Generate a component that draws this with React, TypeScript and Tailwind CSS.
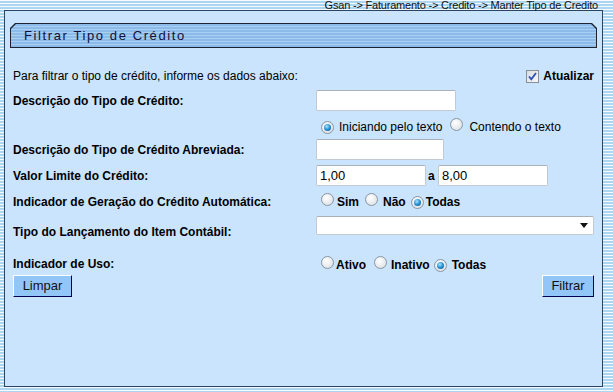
import React from "react";

const Radio = ({ checked }: { checked?: boolean }) => (
  <span className="inline-flex w-[13px] h-[13px] rounded-full border border-[#8796a4] bg-[radial-gradient(circle_at_40%_35%,#ffffff,#d6dbe0)] items-center justify-center shrink-0">
    {checked && (
      <span className="w-[7px] h-[7px] rounded-full bg-[radial-gradient(circle_at_40%_35%,#a8e4ff,#1d8ad0_55%,#0a4a7c)]" />
    )}
  </span>
);

const Label = ({ children }: { children: React.ReactNode }) => (
  <div className="w-[303px] shrink-0 font-bold text-[12px] leading-[14px] text-[#000]">{children}</div>
);

const Input = ({ w, value }: { w: string; value?: string }) => (
  <div className={`${w} h-[21px] bg-white border border-[#c3c9cf] border-t-[#a9b0b8] rounded-[2px] text-[13px] leading-[19px] pl-[3px] text-black`}>
    {value}
  </div>
);

export default function App() {
  return (
    <div className="w-[613px] h-[392px] overflow-hidden font-['Liberation_Sans',Arial,sans-serif] bg-[repeating-linear-gradient(to_bottom,#f4faff_0px,#f4faff_1px,#acd6f0_1px,#acd6f0_3px)]">
      <div className="h-[10px] flex justify-end pr-[15px]">
        <span className="text-[11px] leading-[10px] tracking-[-0.2px] text-[#111]">
          Gsan -&gt; Faturamento -&gt; Credito -&gt; Manter Tipo de Credito
        </span>
      </div>
      <div className="ml-[4px] w-[599px] h-[377px] border border-[#2a4563] bg-[#cae4fd]">
        {/* header bar */}
        <div className="ml-[5px] mt-[12px] w-[587px] h-[25px] bg-[#1c2433] [clip-path:polygon(5px_0,calc(100%-5px)_0,100%_5px,100%_100%,0_100%,0_5px)] p-[1px]">
          <div className="w-full h-full [clip-path:polygon(5px_0,calc(100%-5px)_0,100%_5px,100%_100%,0_100%,0_5px)] bg-[repeating-linear-gradient(to_bottom,#8cbbe9_0px,#8cbbe9_2px,#a8cff4_2px,#a8cff4_3px)] pl-[13px] flex items-center">
            <span className="text-[13px] tracking-[1.6px] text-[#10103a]">Filtrar Tipo de Crédito</span>
          </div>
        </div>

        <div className="pl-[8px] pr-[8px] text-[12px] text-black">
          {/* row 1 */}
          <div className="mt-[18px] h-[20px] flex items-center justify-between">
            <span className="leading-[14px]">Para filtrar o tipo de crédito, informe os dados abaixo:</span>
            <div className="flex items-center">
              <span className="w-[13px] h-[13px] border border-[#8a8f96] bg-[linear-gradient(135deg,#d9dde2,#f6f7f9)] flex items-center justify-center">
                <svg width="11" height="11" viewBox="0 0 11 11">
                  <path d="M2 5.5 L4.3 8.2 L9 2" stroke="#2a4fb5" strokeWidth="1.8" fill="none" />
                </svg>
              </span>
              <span className="ml-[4px] font-bold text-[12px] leading-[14px]">Atualizar</span>
            </div>
          </div>

          {/* row 2 */}
          <div className="mt-[4px] h-[21px] flex items-center">
            <Label>Descrição do Tipo de Crédito:</Label>
            <Input w="w-[140px]" />
          </div>

          {/* row 3 */}
          <div className="mt-[5px] h-[22px] flex items-center pl-[303px]">
            <span className="ml-[5px]"><Radio checked /></span>
            <span className="ml-[5px] leading-[14px]">Iniciando pelo texto</span>
            <span className="ml-[8px]"><Radio /></span>
            <span className="ml-[6px] leading-[14px]">Contendo o texto</span>
          </div>

          {/* row 4 */}
          <div className="mt-[1px] h-[21px] flex items-center">
            <Label>Descrição do Tipo de Crédito Abreviada:</Label>
            <Input w="w-[128px]" />
          </div>

          {/* row 5 */}
          <div className="mt-[5px] h-[21px] flex items-center">
            <Label>Valor Limite do Crédito:</Label>
            <Input w="w-[110px]" value="1,00" />
            <span className="ml-[2px] w-[10px] font-bold leading-[14px]">a</span>
            <Input w="w-[110px]" value="8,00" />
          </div>

          {/* row 6 */}
          <div className="mt-[5px] h-[21px] flex items-center">
            <Label>Indicador de Geração do Crédito Automática:</Label>
            <span className="ml-[5px]"><Radio /></span>
            <span className="ml-[3px] font-bold leading-[14px]">Sim</span>
            <span className="ml-[6px]"><Radio /></span>
            <span className="ml-[5px] font-bold leading-[14px]">Não</span>
            <span className="ml-[5px]"><Radio checked /></span>
            <span className="ml-[2px] font-bold leading-[14px]">Todas</span>
          </div>

          {/* row 7 */}
          <div className="mt-[3px] h-[28px] flex items-start">
            <div className="mt-[10px]"><Label>Tipo do Lançamento do Item Contábil:</Label></div>
            <div className="mt-[1px] w-[278px] h-[19px] bg-white border border-[#c3c9cf] border-t-[#a9b0b8] rounded-[2px] flex items-center justify-end pr-[5px]">
              <svg width="8" height="5" viewBox="0 0 8 5"><path d="M0 0 H8 L4 5 Z" fill="#111" /></svg>
            </div>
          </div>

          {/* row 8 */}
          <div className="mt-[12px] h-[20px] flex items-center">
            <div className="-mt-[3px]"><Label>Indicador de Uso:</Label></div>
            <span className="ml-[5px]"><Radio /></span>
            <span className="ml-[2px] font-bold leading-[14px]">Ativo</span>
            <span className="ml-[8px]"><Radio /></span>
            <span className="ml-[4px] font-bold leading-[14px]">Inativo</span>
            <span className="ml-[4px]"><Radio checked /></span>
            <span className="ml-[5px] font-bold leading-[14px]">Todas</span>
          </div>

          {/* buttons */}
          <div className="mt-0 flex justify-between">
            <button className="w-[59px] h-[22px] bg-[#92c6f8] border border-t-white border-l-white border-r-[#000050] border-b-[#000050] text-[13px] leading-[18px] text-[#111]">
              Limpar
            </button>
            <button className="w-[52px] h-[22px] bg-[#92c6f8] border border-t-white border-l-white border-r-[#000050] border-b-[#000050] text-[13px] leading-[18px] text-[#111]">
              Filtrar
            </button>
          </div>
        </div>
      </div>
    </div>
  );
}
